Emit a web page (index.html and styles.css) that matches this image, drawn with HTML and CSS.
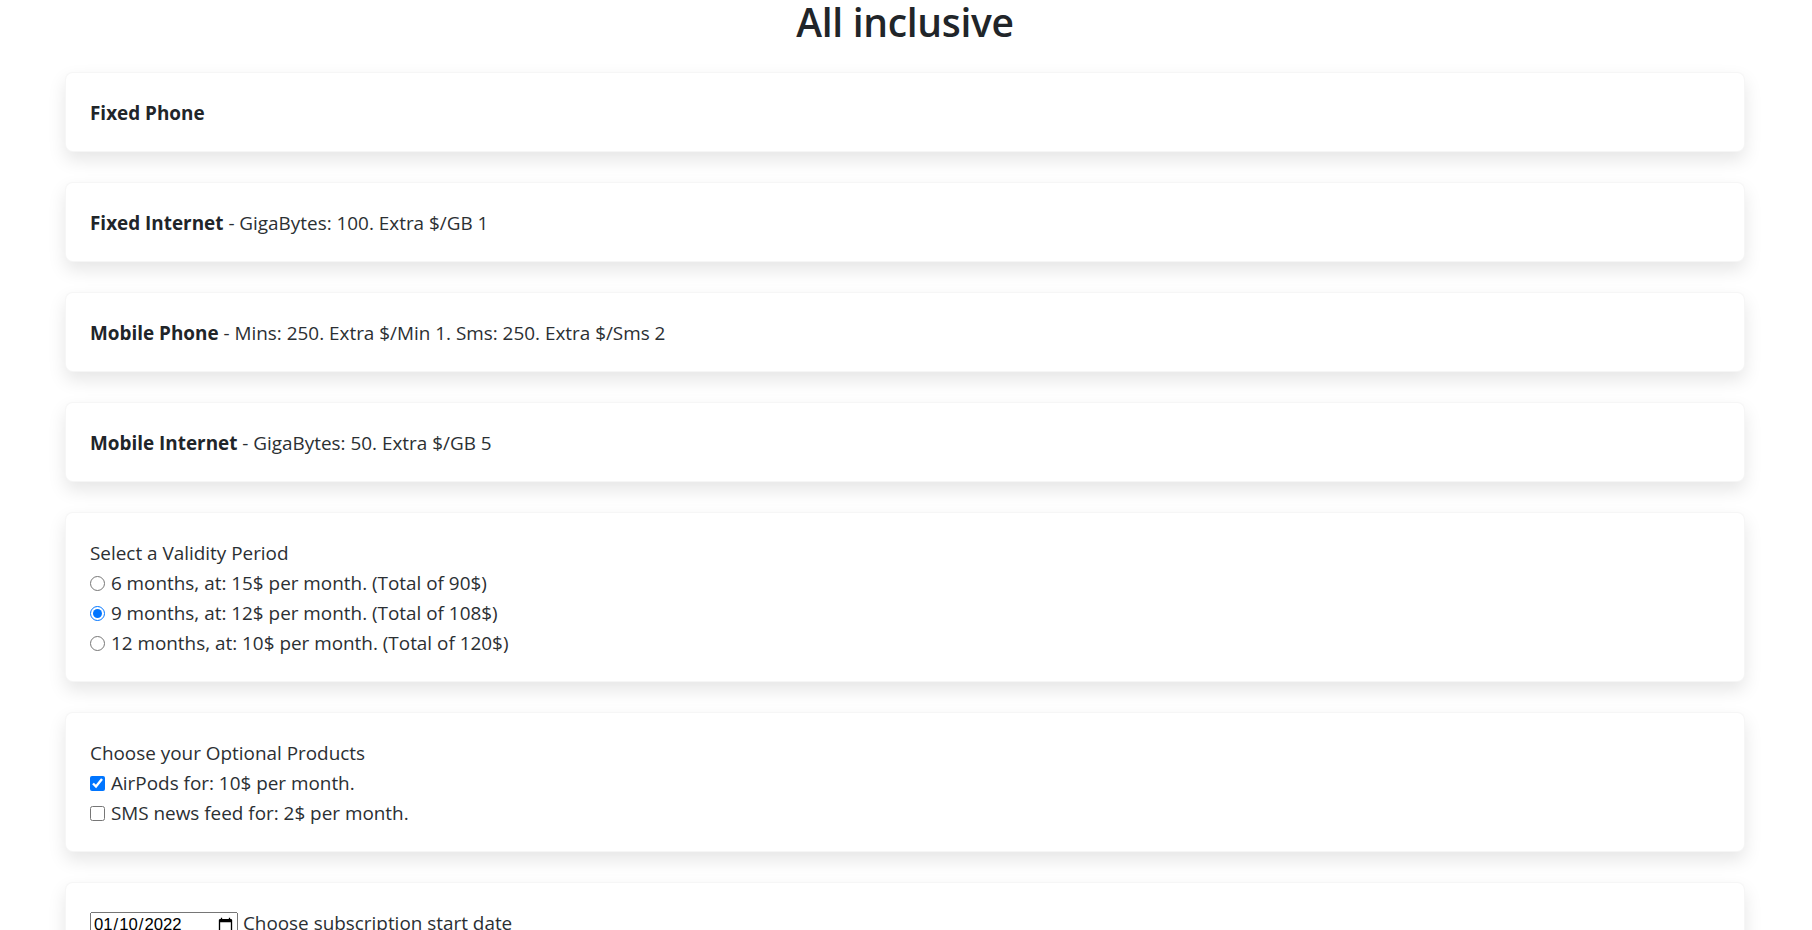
FILE: index.html
```html
<!DOCTYPE html>
<html lang="en">
<head>
<meta charset="utf-8">
<title>All inclusive</title>
<link rel="stylesheet" href="styles.css">
</head>
<body>
<main class="page">
  <h1 class="title">All inclusive</h1>

  <section class="card"><b>Fixed Phone</b></section>
  <section class="card"><b>Fixed Internet</b> - GigaBytes: 100. Extra $/GB 1</section>
  <section class="card"><b>Mobile Phone</b> - Mins: 250. Extra $/Min 1. Sms: 250. Extra $/Sms 2</section>
  <section class="card"><b>Mobile Internet</b> - GigaBytes: 50. Extra $/GB 5</section>

  <section class="card">
    <div class="line">Select a Validity Period</div>
    <label class="line"><input class="radio" type="radio" name="period"> 6 months, at: 15$ per month. (Total of 90$)</label>
    <label class="line"><input class="radio" type="radio" name="period" checked> 9 months, at: 12$ per month. (Total of 108$)</label>
    <label class="line"><input class="radio" type="radio" name="period"> 12 months, at: 10$ per month. (Total of 120$)</label>
  </section>

  <section class="card">
    <div class="line">Choose your Optional Products</div>
    <label class="line"><input class="check" type="checkbox" checked> AirPods for: 10$ per month.</label>
    <label class="line"><input class="check" type="checkbox"> SMS news feed for: 2$ per month.</label>
  </section>

  <section class="card">
    <label class="line"><input class="date" type="date" value="2022-01-10"> Choose subscription start date</label>
  </section>
</main>
</body>
</html>
```

FILE: styles.css
```css
html, body {
  margin: 0;
  padding: 0;
  background: #ffffff;
}

body {
  font-family: "Open Sans", "Noto Sans", sans-serif;
  color: #2b2f33;
  font-size: 18.9px;
  line-height: 30px;
}

.page {
  padding: 0 67px 0 65px;
}

.title {
  margin: 0 0 29px;
  font-size: 39px;
  line-height: 43px;
  font-weight: 600;
  letter-spacing: -0.3px;
  text-align: center;
  color: #212529;
}

.card {
  background: #fff;
  border: 1px solid rgba(0, 0, 0, 0.035);
  border-radius: 8px;
  box-shadow: 0 8px 18px rgba(0, 0, 0, 0.1);
  padding: 25px 24px 23px;
  margin-bottom: 30px;
}

.card b {
  font-weight: 700;
  color: #212529;
}

.line {
  display: block;
}

.radio {
  width: 15px;
  height: 15px;
  margin: 0 1px 0 0;
  vertical-align: -1px;
}

.check {
  width: 15px;
  height: 15px;
  margin: 0 1px 0 0;
  vertical-align: -1px;
}

.date {
  box-sizing: border-box;
  font-size: 16.7px;
  font-family: "Liberation Sans", sans-serif;
  width: 148px;
  margin: 0;
}
```
